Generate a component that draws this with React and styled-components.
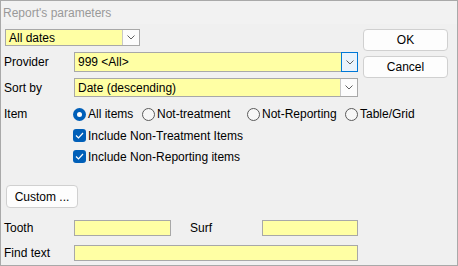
import React from 'react'
import styled, { createGlobalStyle } from 'styled-components'

const GlobalStyle = createGlobalStyle`
  html, body {
    margin: 0;
    padding: 0;
    background: #f0f0f0;
  }
  body {
    font-family: "Liberation Sans", Arial, sans-serif;
    font-size: 12px;
    color: #000;
  }
`

const Window = styled.div`
  box-sizing: border-box;
  width: 458px;
  height: 266px;
  border: 1px solid #a9a9a9;
  background: #f0f0f0;
  display: flex;
  flex-direction: column;
`

const TitleBar = styled.div`
  height: 23px;
  padding-left: 2px;
  display: flex;
  align-items: center;
  color: #999;
  font-size: 12px;
  background: #f2f2f2;
`

const Content = styled.div`
  display: flex;
  padding-top: 5px;
`

const LeftCol = styled.div`
  width: 357px;
  padding-left: 3px;
  box-sizing: border-box;
  display: flex;
  flex-direction: column;
`

const RightCol = styled.div`
  margin-left: 5px;
  width: 85px;
  display: flex;
  flex-direction: column;
  gap: 5px;
`

const Row = styled.div`
  display: flex;
  align-items: center;
  margin-top: ${p => p.$top || 0}px;
  margin-left: ${p => p.$left || 0}px;
`

const Label = styled.span`
  width: ${p => p.$width || 70}px;
  flex-shrink: 0;
  white-space: nowrap;
`

const ComboBox = styled.div`
  box-sizing: border-box;
  width: ${p => p.$width}px;
  height: ${p => p.$height}px;
  background: #ffffa4;
  border: 1px solid #a8a8a8;
  display: flex;
  align-items: stretch;
`

const ComboText = styled.span`
  flex: 1;
  padding-left: 3px;
  display: flex;
  align-items: center;
  white-space: nowrap;
`

const DropButton = styled.span`
  box-sizing: border-box;
  width: 17px;
  background: ${p => (p.$focus ? '#eaf3fc' : '#fcfcfc')};
  border: 1px solid ${p => (p.$focus ? '#0078d7' : '#c8c8c8')};
  border-right-width: ${p => (p.$focus ? 1 : 0)}px;
  border-top-width: ${p => (p.$focus ? 1 : 0)}px;
  border-bottom-width: ${p => (p.$focus ? 1 : 0)}px;
  margin: ${p => (p.$focus ? '-1px -1px -1px 0' : '0')};
  display: flex;
  align-items: center;
  justify-content: center;
`

const Chevron = () => (
  <svg width="8" height="5" viewBox="0 0 8 5">
    <path d="M0.5 0.5 L4 4 L7.5 0.5" fill="none" stroke="#606060" strokeWidth="1" />
  </svg>
)

const Combo = ({ width, height, value, focus }) => (
  <ComboBox $width={width} $height={height}>
    <ComboText>{value}</ComboText>
    <DropButton $focus={focus}>
      <Chevron />
    </DropButton>
  </ComboBox>
)

const Button = styled.div`
  box-sizing: border-box;
  width: ${p => p.$width || 85}px;
  height: ${p => p.$height || 22}px;
  background: #fdfdfd;
  border: 1px solid #d0d0d0;
  border-radius: 4px;
  display: flex;
  align-items: center;
  justify-content: center;
  margin-left: ${p => p.$left || 0}px;
  margin-top: ${p => p.$top || 0}px;
`

const RadioGroup = styled.div`
  display: grid;
  grid-template-columns: 69px 105px 98px auto;
  height: 13px;
`

const Option = styled.label`
  display: flex;
  align-items: center;
  gap: 2px;
  white-space: nowrap;
  height: 13px;
`

const RadioDot = styled.span`
  box-sizing: border-box;
  width: 13px;
  height: 13px;
  border-radius: 50%;
  flex-shrink: 0;
  border: ${p => (p.$on ? '0' : '1px solid #5a5a5a')};
  background: ${p => (p.$on ? '#005fb8' : '#f7f7f7')};
  display: flex;
  align-items: center;
  justify-content: center;
  &::after {
    content: '';
    display: ${p => (p.$on ? 'block' : 'none')};
    width: 5px;
    height: 5px;
    border-radius: 50%;
    background: #fff;
  }
`

const CheckBox = styled.span`
  box-sizing: border-box;
  width: 13px;
  height: 13px;
  border-radius: 3px;
  background: #005fb8;
  flex-shrink: 0;
  display: flex;
  align-items: center;
  justify-content: center;
`

const Check = () => (
  <svg width="9" height="7" viewBox="0 0 9 7">
    <path d="M1 3.5 L3.5 6 L8 1" fill="none" stroke="#fff" strokeWidth="1.2" />
  </svg>
)

const TextField = styled.div`
  box-sizing: border-box;
  width: ${p => p.$width}px;
  height: 16px;
  background: #ffffa4;
  border: 1px solid #a8a8a8;
  flex-shrink: 0;
`

const radios = ['All items', 'Not-treatment', 'Not-Reporting', 'Table/Grid']

export default function App() {
  return (
    <>
      <GlobalStyle />
      <Window>
        <TitleBar>Report's parameters</TitleBar>
        <Content>
          <LeftCol>
            <Row $left={1}>
              <Combo width={135} height={17} value="All dates" />
            </Row>
            <Row $top={6}>
              <Label>Provider</Label>
              <Combo width={284} height={20} value="999 <All>" focus />
            </Row>
            <Row $top={6}>
              <Label>Sort by</Label>
              <Combo width={284} height={19} value="Date (descending)" />
            </Row>
            <Row $top={10}>
              <Label $width={69}>Item</Label>
              <RadioGroup>
                {radios.map((r, i) => (
                  <Option key={r}>
                    <RadioDot $on={i === 0} />
                    {r}
                  </Option>
                ))}
              </RadioGroup>
            </Row>
            <Row $top={8} $left={69}>
              <Option>
                <CheckBox><Check /></CheckBox>
                Include Non-Treatment Items
              </Option>
            </Row>
            <Row $top={8} $left={69}>
              <Option>
                <CheckBox><Check /></CheckBox>
                Include Non-Reporting items
              </Option>
            </Row>
            <Button $width={72} $height={23} $left={2} $top={22}>Custom ...</Button>
            <Row $top={12}>
              <Label>Tooth</Label>
              <TextField $width={97} />
              <Label $width={72} style={{ marginLeft: 19 }}>Surf</Label>
              <TextField $width={96} />
            </Row>
            <Row $top={9}>
              <Label>Find text</Label>
              <TextField $width={284} />
            </Row>
          </LeftCol>
          <RightCol>
            <Button>OK</Button>
            <Button>Cancel</Button>
          </RightCol>
        </Content>
      </Window>
    </>
  )
}
